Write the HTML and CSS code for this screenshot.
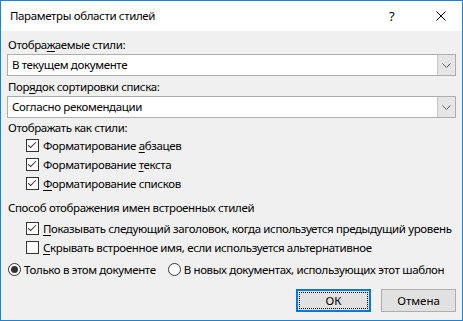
FILE: index.html
```html
<!DOCTYPE html>
<html lang="ru">
<head>
  <meta charset="UTF-8">
  <title>Параметры области стилей</title>
  <link rel="stylesheet" href="styles.css">
</head>
<body>
  <div class="window">
    <div class="titlebar">
      <span class="title">Параметры области стилей</span>
      <span class="help">?</span>
      <span class="close">
        <svg width="10" height="10" viewBox="0 0 10 10"><path d="M0.5 0.5 L9.5 9.5 M9.5 0.5 L0.5 9.5" stroke="#000" stroke-width="1" fill="none"/></svg>
      </span>
    </div>

    <div class="content">
      <div class="field-label">Отобра<u>ж</u>аемые стили:</div>
      <div class="combo">
        <span class="combo-value">В текущем документе</span>
        <span class="combo-btn"><svg width="9" height="5" viewBox="0 0 9 5"><path d="M0.5 0.5 L4.5 4.5 L8.5 0.5" stroke="#606060" fill="none"/></svg></span>
      </div>

      <div class="field-label second">Пор<u>я</u>док сортировки списка:</div>
      <div class="combo">
        <span class="combo-value">Согласно рекомендации</span>
        <span class="combo-btn"><svg width="9" height="5" viewBox="0 0 9 5"><path d="M0.5 0.5 L4.5 4.5 L8.5 0.5" stroke="#606060" fill="none"/></svg></span>
      </div>

      <div class="group-label">Отображать как стили:</div>
      <div class="check-list">
        <div class="check"><span class="box checked"></span><span>Форматирование <u>а</u>бзацев</span></div>
        <div class="check"><span class="box checked"></span><span>Форматирование <u>т</u>екста</span></div>
        <div class="check"><span class="box checked"></span><span><u>Ф</u>орматирование списков</span></div>
      </div>

      <div class="group-label builtin">Способ отображения имен встроенных стилей</div>
      <div class="check-list builtin-list">
        <div class="check"><span class="box checked"></span><span><u>П</u>оказывать следующий заголовок, когда используется предыдущий уровень</span></div>
        <div class="check"><span class="box"></span><span><u>С</u>крывать встроенное имя, если используется альтернативное</span></div>
      </div>

      <div class="radios">
        <div class="radio"><span class="dot selected"></span><span>Только в этом документе</span></div>
        <div class="radio"><span class="dot"></span><span>В новых документах, использующих этот шаблон</span></div>
      </div>

      <div class="buttons">
        <button class="btn default"><span class="focus">ОК</span></button>
        <button class="btn">Отмена</button>
      </div>
    </div>
  </div>
</body>
</html>
```

FILE: styles.css
```css
body {
  margin: 0;
  font-family: "Noto Sans", "Liberation Sans", sans-serif;
  font-size: 11.5px;
  letter-spacing: -0.36px;
  color: #000;
}

u {
  text-decoration: underline;
  text-underline-offset: 2px;
}

.window {
  width: 463px;
  height: 321px;
  box-sizing: border-box;
  border: 1px solid #1883d7;
  background: #f0f0f0;
  display: flex;
  flex-direction: column;
}

.titlebar {
  height: 30px;
  background: #fff;
  display: flex;
  align-items: center;
  padding-left: 9px;
}

.title {
  flex: 1;
  line-height: 16px;
}

.help {
  width: 10px;
  margin-right: 37px;
  font-size: 13px;
}

.close {
  display: flex;
  margin-right: 16px;
}

.content {
  padding: 6px 6px 0 6px;
  line-height: 16px;
  white-space: nowrap;
}

.field-label {
  padding-left: 1px;
}

.field-label.second {
  margin-top: 3px;
}

.combo {
  margin-top: 1px;
  height: 22px;
  box-sizing: border-box;
  border: 1px solid #adadad;
  background: #fff;
  display: flex;
  align-items: stretch;
}

.combo-value {
  flex: 1;
  padding-left: 4px;
  display: flex;
  align-items: center;
}

.combo-btn {
  width: 17px;
  background: #e5e5e5;
  border-left: 1px solid #c8c8c8;
  display: flex;
  align-items: center;
  justify-content: center;
}

.group-label {
  margin-top: 2px;
  padding-left: 1px;
}

.group-label.builtin {
  margin-top: 7px;
}

.check-list {
  padding-left: 19px;
}

.builtin-list {
  margin-top: 3px;
}

.check {
  height: 19px;
  display: flex;
  align-items: center;
}

.box {
  width: 13px;
  height: 13px;
  flex: none;
  box-sizing: border-box;
  border: 1px solid #333;
  background: #fff;
  margin-right: 4px;
  position: relative;
}

.box.checked::after {
  content: "";
  position: absolute;
  left: 3px;
  top: 0px;
  width: 3px;
  height: 7px;
  border-right: 1px solid #333;
  border-bottom: 1px solid #333;
  transform: rotate(45deg);
}

.radios {
  margin-top: 3px;
  height: 19px;
  display: flex;
  align-items: center;
  padding-left: 1px;
  gap: 12px;
}

.radio {
  display: flex;
  align-items: center;
}

.dot {
  width: 13px;
  height: 13px;
  flex: none;
  box-sizing: border-box;
  border: 1px solid #333;
  border-radius: 50%;
  background: #fff;
  margin-right: 3px;
  display: flex;
  align-items: center;
  justify-content: center;
}

.dot.selected::after {
  content: "";
  width: 7px;
  height: 7px;
  border-radius: 50%;
  background: #333;
}

.buttons {
  margin-top: 10px;
  display: flex;
  justify-content: flex-end;
  gap: 10px;
}

.btn {
  width: 75px;
  height: 23px;
  box-sizing: border-box;
  border: 1px solid #adadad;
  background: #e1e1e1;
  font: inherit;
  color: #000;
  padding: 0;
}

.btn.default {
  border: 2px solid #0078d7;
  padding: 1px;
}

.focus {
  display: flex;
  align-items: center;
  justify-content: center;
  height: 100%;
  box-sizing: border-box;
  border: 1px dotted #000;
}
```
